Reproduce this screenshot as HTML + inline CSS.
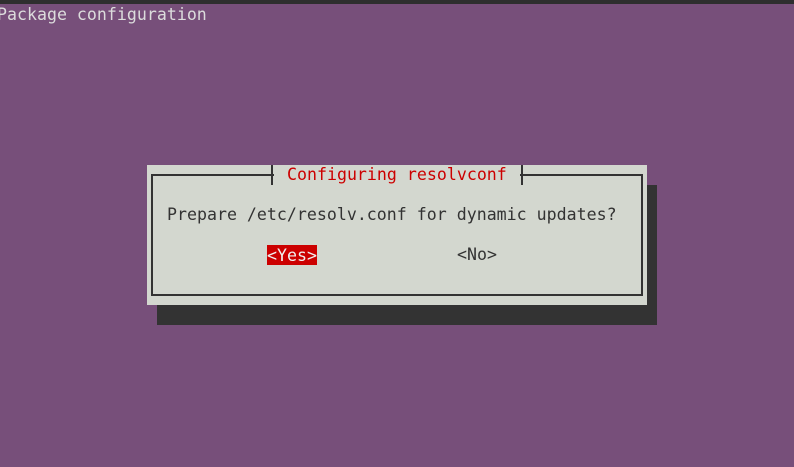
<!DOCTYPE html>
<html><head><meta charset="utf-8"><style>
html,body{margin:0;padding:0}
body{width:794px;height:467px;background:#774f7a;position:relative;overflow:hidden;font-family:"DejaVu Sans Mono","Liberation Mono",monospace;font-size:16.6px;}
.t{position:absolute;white-space:pre;line-height:20px;height:20px;}
.a{position:absolute}
</style></head><body>
<div class="a" style="left:0;top:0;width:794px;height:4px;background:#2e2e2e"></div>
<div class="t" style="left:-3px;top:5px;color:#dcdcdc">Package configuration</div>
<div class="a" style="left:157px;top:185px;width:500px;height:140px;background:#333333"></div>
<div class="a" style="left:147px;top:165px;width:500px;height:140px;background:#d3d7cf"></div>
<div class="a" style="left:151px;top:174px;width:488px;height:118px;border:2px solid #333"></div>
<div class="a" style="left:274px;top:170px;width:246px;height:10px;background:#d3d7cf"></div>
<div class="a" style="left:271px;top:165px;width:2px;height:20px;background:#333"></div>
<div class="a" style="left:521px;top:165px;width:2px;height:20px;background:#333"></div>
<div class="t" style="left:287px;top:165px;color:#cc0000">Configuring resolvconf</div>
<div class="t" style="left:167px;top:205px;color:#333">Prepare /etc/resolv.conf for dynamic updates?</div>
<div class="t" style="left:267px;top:245px;width:50px;height:20px;line-height:21px;background:#cc0000;color:#f0f0f0">&lt;Yes&gt;</div>
<div class="t" style="left:457px;top:245px;color:#333">&lt;No&gt;</div>
</body></html>
